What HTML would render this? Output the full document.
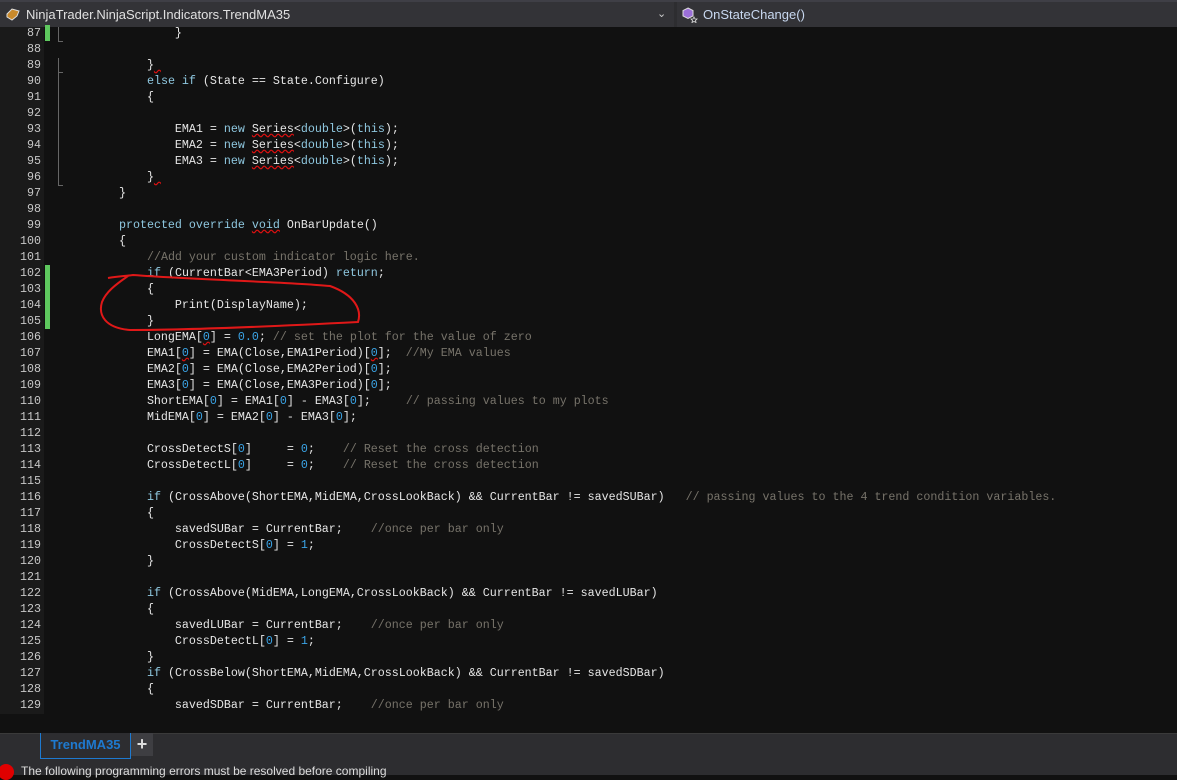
<!DOCTYPE html>
<html><head><meta charset="utf-8"><style>
*{margin:0;padding:0;box-sizing:border-box}
body{width:1177px;height:775px;background:#111;overflow:hidden;position:relative;font-family:"Liberation Sans",sans-serif}
.top{position:absolute;left:0;top:0;width:1177px;height:27px;background:#2d2d30;border-top:2px solid #3f3f46}
.dd1{position:absolute;left:0;top:2px;width:674px;height:25px;background:#333337;color:#e0e0e0;font-size:13px;line-height:25px;padding-left:26px}
.dd2{position:absolute;left:677px;top:2px;width:500px;height:25px;background:#333337;color:#c8d8f0;font-size:13px;line-height:25px;padding-left:26px}
.gut{position:absolute;left:0;top:27px;width:44px;height:687px;background:#1a1a1a}
.ln{position:absolute;left:0;width:41px;text-align:right;color:#c8c8c8;font:11.67px/16px "Liberation Mono",monospace}
.cd{position:absolute;left:63px;white-space:pre;color:#e6e6e6;font:11.67px/16px "Liberation Mono",monospace}
.k{color:#8fc8e0}.c{color:#77736a}.n{color:#3ba4e6}
.sq{text-decoration:underline wavy #e01010;text-decoration-skip-ink:none}
.g{position:absolute;left:45px;width:5px;background:#5ec85e}
.bot{position:absolute;left:0;top:733px;width:1177px;height:42px;background:#2d2d30;border-top:1px solid #3a3a3a}
</style></head><body>
<div class="top"></div>
<div class="dd1"><svg style="position:absolute;left:5px;top:5px" width="16" height="15" viewBox="0 0 16 15"><path d="M2 7 L7 2 L14 4 L12 9 L7 13 L2 10Z" fill="#c98a2c" stroke="#e0e0e0" stroke-width="1"/></svg>NinjaTrader.NinjaScript.Indicators.TrendMA35<span style="position:absolute;left:657px;top:0;color:#ccc;font-size:11px">&#8964;</span></div>
<div class="dd2"><svg style="position:absolute;left:5px;top:5px" width="16" height="16" viewBox="0 0 16 16"><path d="M6 1 L11 3.5 V9 L6 11.5 L1 9 V3.5Z" fill="#9b6fd8" stroke="#ddd"/><path d="M12 10 l1 2 2 0 -1.5 1.5 .5 2 -2-1 -2 1 .5-2 -1.5-1.5 2 0z" fill="none" stroke="#ddd" stroke-width=".8"/></svg>OnStateChange()</div>
<div class="gut"></div>
<div class="g" style="top:25px;height:16px"></div>
<div class="g" style="top:265px;height:64px"></div>
<div style="position:absolute;left:58px;top:27px;width:1px;height:14px;background:#666"></div><div style="position:absolute;left:58px;top:41px;width:5px;height:1px;background:#666"></div>
<div style="position:absolute;left:58px;top:58px;width:1px;height:128px;background:#666"></div><div style="position:absolute;left:58px;top:72px;width:5px;height:1px;background:#666"></div><div style="position:absolute;left:58px;top:185px;width:5px;height:1px;background:#666"></div>
<div id="lines"></div>
<div class="ln" style="top:25px">87<br>88<br>89<br>90<br>91<br>92<br>93<br>94<br>95<br>96<br>97<br>98<br>99<br>100<br>101<br>102<br>103<br>104<br>105<br>106<br>107<br>108<br>109<br>110<br>111<br>112<br>113<br>114<br>115<br>116<br>117<br>118<br>119<br>120<br>121<br>122<br>123<br>124<br>125<br>126<br>127<br>128<br>129</div>
<div class="cd" style="top:25px">                }

            }<span class="sq"> </span>
            <span class="k">else if</span> (State == State.Configure)
            {

                EMA1 = <span class="k">new</span> <span class="sq">Series</span>&lt;<span class="k">double</span>&gt;(<span class="k">this</span>);
                EMA2 = <span class="k">new</span> <span class="sq">Series</span>&lt;<span class="k">double</span>&gt;(<span class="k">this</span>);
                EMA3 = <span class="k">new</span> <span class="sq">Series</span>&lt;<span class="k">double</span>&gt;(<span class="k">this</span>);
            }<span class="sq"> </span>
        }

        <span class="k">protected override</span> <span class="k sq">void</span> OnBarUpdate()
        {
            <span class="c">//Add your custom indicator logic here.</span>
            <span class="k">if</span> (CurrentBar&lt;EMA3Period) <span class="k">return</span>;
            {
                Print(DisplayName);
            }
            LongEMA[<span class="n sq">0</span>] = <span class="n">0.0</span>; <span class="c">// set the plot for the value of zero</span>
            EMA1[<span class="n sq">0</span>] = EMA(Close,EMA1Period)[<span class="n sq">0</span>];  <span class="c">//My EMA values</span>
            EMA2[<span class="n">0</span>] = EMA(Close,EMA2Period)[<span class="n">0</span>];
            EMA3[<span class="n">0</span>] = EMA(Close,EMA3Period)[<span class="n">0</span>];
            ShortEMA[<span class="n">0</span>] = EMA1[<span class="n">0</span>] - EMA3[<span class="n">0</span>];     <span class="c">// passing values to my plots</span>
            MidEMA[<span class="n">0</span>] = EMA2[<span class="n">0</span>] - EMA3[<span class="n">0</span>];

            CrossDetectS[<span class="n">0</span>]     = <span class="n">0</span>;    <span class="c">// Reset the cross detection</span>
            CrossDetectL[<span class="n">0</span>]     = <span class="n">0</span>;    <span class="c">// Reset the cross detection</span>

            <span class="k">if</span> (CrossAbove(ShortEMA,MidEMA,CrossLookBack) &amp;&amp; CurrentBar != savedSUBar)   <span class="c">// passing values to the 4 trend condition variables.</span>
            {
                savedSUBar = CurrentBar;    <span class="c">//once per bar only</span>
                CrossDetectS[<span class="n">0</span>] = <span class="n">1</span>;
            }

            <span class="k">if</span> (CrossAbove(MidEMA,LongEMA,CrossLookBack) &amp;&amp; CurrentBar != savedLUBar)
            {
                savedLUBar = CurrentBar;    <span class="c">//once per bar only</span>
                CrossDetectL[<span class="n">0</span>] = <span class="n">1</span>;
            }
            <span class="k">if</span> (CrossBelow(ShortEMA,MidEMA,CrossLookBack) &amp;&amp; CurrentBar != savedSDBar)
            {
                savedSDBar = CurrentBar;    <span class="c">//once per bar only</span></div>
<svg style="position:absolute;left:0;top:0" width="1177" height="775"><path d="M108 278 C120 276 126 276 133 275 C200 280 290 282 330 286 C355 295 362 310 358 322 C300 325 200 330 130 330 C105 328 98 315 102 302 C106 292 115 285 128 276" fill="none" stroke="#e01818" stroke-width="2"/></svg>
<div class="bot"></div>
<div style="position:absolute;left:40px;top:733px;width:91px;height:26px;border:1px solid #1e7ad0;border-top:none;color:#1e7ad0;font-weight:bold;font-size:13px;line-height:24px;text-align:center;background:#2d2d30">TrendMA35</div>
<div style="position:absolute;left:131px;top:733px;width:22px;height:23px;background:#3e3e42;color:#ddd;font-size:18px;line-height:22px;text-align:center;font-weight:bold">+</div>
<div style="position:absolute;left:-2px;top:764px;width:16px;height:16px;border-radius:50%;background:#e00000"></div>
<div style="position:absolute;left:21px;top:764px;color:#ddd;font-size:12px">The following programming errors must be resolved before compiling</div>
</body></html>
